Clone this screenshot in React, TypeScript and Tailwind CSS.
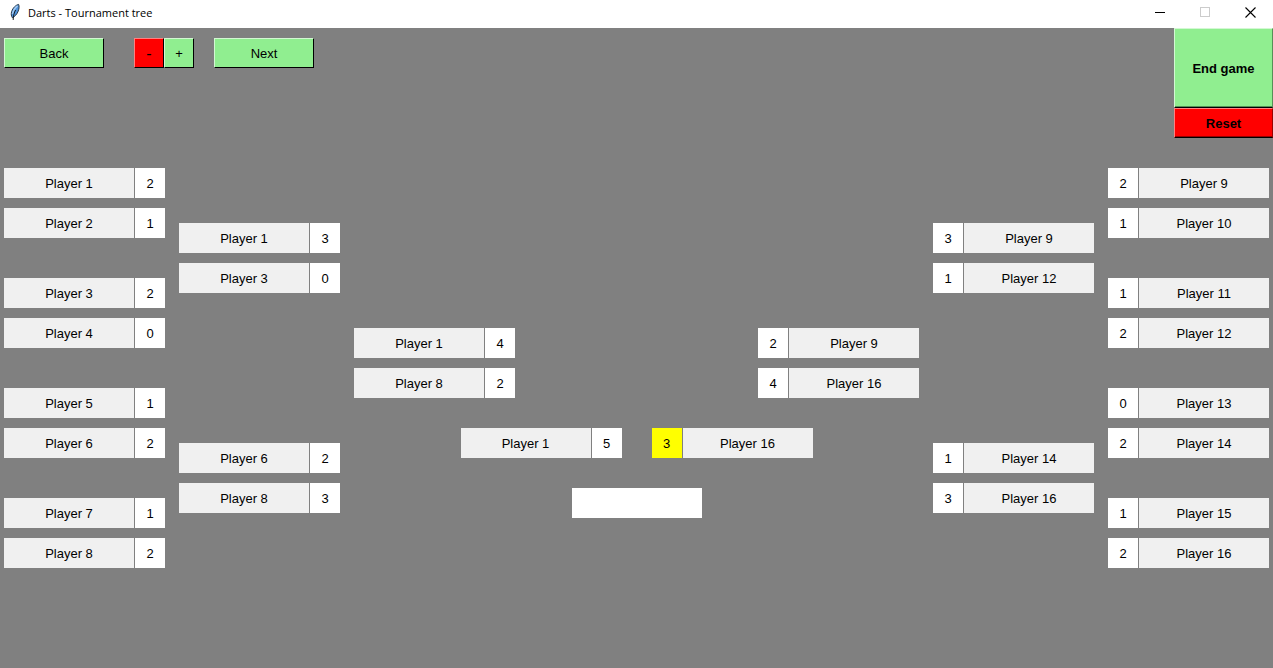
import { useState } from "react";

type Side = "left" | "right";
type Slot = { id: string; player: string; score: number };
type Match = [Slot, Slot];

const slot = (id: string, player: number, score: number): Slot => ({
  id,
  player: `Player ${player}`,
  score,
});

const match = (id: string, a: [number, number], b: [number, number]): Match => [
  slot(`${id}a`, a[0], a[1]),
  slot(`${id}b`, b[0], b[1]),
];

const leftRounds: Match[][] = [
  [
    match("l1", [1, 2], [2, 1]),
    match("l2", [3, 2], [4, 0]),
    match("l3", [5, 1], [6, 2]),
    match("l4", [7, 1], [8, 2]),
  ],
  [match("l5", [1, 3], [3, 0]), match("l6", [6, 2], [8, 3])],
  [match("l7", [1, 4], [8, 2])],
];

const rightRounds: Match[][] = [
  [
    match("r1", [9, 2], [10, 1]),
    match("r2", [11, 1], [12, 2]),
    match("r3", [13, 0], [14, 2]),
    match("r4", [15, 1], [16, 2]),
  ],
  [match("r5", [9, 3], [12, 1]), match("r6", [14, 1], [16, 3])],
  [match("r7", [9, 2], [16, 4])],
];

const finalists: Match = [slot("f1", 1, 5), slot("f2", 16, 3)];

const roundLayout = [
  "flex flex-col gap-10",
  "flex flex-col gap-[150px] pt-[55px]",
  "flex flex-col pt-40",
];

const green =
  "pt-0.5 bg-[#90ee90] border border-t-[#d3f8d3] border-l-[#d3f8d3] border-r-black border-b-black";
const red =
  "pt-0.5 bg-[#ff0000] border border-t-[#ff8080] border-l-[#ff8080] border-r-black border-b-black";

type Board = {
  selected: string;
  onSelect: (id: string) => void;
  scoreOf: (slot: Slot) => number;
};

function Entry({ slot, side, board }: { slot: Slot; side: Side; board: Board }) {
  const active = board.selected === slot.id;
  return (
    <div className={`flex gap-px ${side === "right" ? "flex-row-reverse" : ""}`}>
      <span className="flex h-[30px] w-[130px] items-center justify-center bg-[#f0f0f0] pt-0.5">
        {slot.player}
      </span>
      <button
        type="button"
        aria-label={`${slot.player} score ${board.scoreOf(slot)}`}
        aria-pressed={active}
        onClick={() => board.onSelect(slot.id)}
        className={`h-[30px] w-[30px] pt-0.5 ${active ? "bg-[#ffff00]" : "bg-white"}`}
      >
        {board.scoreOf(slot)}
      </button>
    </div>
  );
}

function Half({ rounds, side, board }: { rounds: Match[][]; side: Side; board: Board }) {
  return (
    <div className={`flex items-start gap-3.5 ${side === "right" ? "flex-row-reverse" : ""}`}>
      {rounds.map((matches, round) => (
        <div key={round} className={roundLayout[round]}>
          {matches.map(([a, b]) => (
            <div key={a.id} className="flex flex-col gap-2.5">
              <Entry slot={a} side={side} board={board} />
              <Entry slot={b} side={side} board={board} />
            </div>
          ))}
        </div>
      ))}
    </div>
  );
}

function Feather() {
  return (
    <svg width="12" height="18" viewBox="0 0 12 18" aria-hidden="true">
      <path
        d="M9.6 1.4C6.8 2 3.6 5 2.6 8.6C2 11 2.2 13 3.4 14.8C5.6 13.6 8 11.4 9.2 8.2C10.2 5.6 10.4 3.2 9.6 1.4Z"
        fill="#4f93dc"
        stroke="#1c2a3a"
        strokeWidth="0.9"
      />
      <path d="M8.6 2.8C6.2 4.4 4.2 7.4 3.5 11" fill="none" stroke="#a5cbf2" strokeWidth="1.5" />
      <path d="M6.6 7C5.2 9.6 4.3 12.4 4.2 17" fill="none" stroke="#111111" strokeWidth="0.9" />
    </svg>
  );
}

function TitleBar() {
  return (
    <header className="flex h-7 items-center justify-between bg-white pl-[9px]">
      <div className="flex h-6 items-center gap-[7px]">
        <div className="pb-1">
          <Feather />
        </div>
        <h1 className="pb-0.5 font-['Open_Sans','Noto_Sans',sans-serif] text-[11px] leading-4">
          Darts - Tournament tree
        </h1>
      </div>
      <div className="flex h-7 items-start">
        <button type="button" aria-label="Minimize" className="flex h-[25px] w-[45px] items-center justify-center">
          <svg width="11" height="11" viewBox="0 0 11 11" shapeRendering="crispEdges">
            <path d="M0 5.5H10" stroke="#000" />
          </svg>
        </button>
        <button type="button" aria-label="Maximize" disabled className="flex h-[25px] w-[45px] items-center justify-center">
          <svg width="11" height="11" viewBox="0 0 11 11" shapeRendering="crispEdges">
            <path d="M0.5 0.5H9.5V9.5H0.5Z" fill="none" stroke="#ccc" />
          </svg>
        </button>
        <button type="button" aria-label="Close" className="flex h-[25px] w-[45px] items-center justify-center">
          <svg width="11" height="11" viewBox="0 0 11 11">
            <path d="M0.5 0.5L10.5 10.5M10.5 0.5L0.5 10.5" stroke="#000" strokeWidth="1.1" />
          </svg>
        </button>
      </div>
    </header>
  );
}

export default function App() {
  const [selected, setSelected] = useState("f2");
  const [changes, setChanges] = useState<Record<string, number>>({});

  const board: Board = {
    selected,
    onSelect: setSelected,
    scoreOf: (s) => s.score + (changes[s.id] ?? 0),
  };
  const change = (by: number) =>
    setChanges((now) => ({ ...now, [selected]: (now[selected] ?? 0) + by }));

  return (
    <div className="flex min-h-screen flex-col bg-[#808080] font-['Liberation_Sans',Arial,sans-serif] text-[13px] leading-4 text-black">
      <TitleBar />
      <div className="flex items-start justify-between pl-1">
        <nav className="flex pt-2.5">
          <button type="button" className={`h-[30px] w-[100px] ${green}`}>
            Back
          </button>
          <div className="mr-5 ml-[30px] flex">
            <button type="button" onClick={() => change(-1)} className={`h-[30px] w-[30px] text-base leading-4 ${red}`}>
              -
            </button>
            <button type="button" onClick={() => change(1)} className={`h-[30px] w-[30px] ${green}`}>
              +
            </button>
          </div>
          <button type="button" className={`h-[30px] w-[100px] ${green}`}>
            Next
          </button>
        </nav>
        <div className="flex w-[99px] flex-col font-bold">
          <button
            type="button"
            className={`h-20 border-r-[#569056]! shadow-[inset_0_-1px_#569056] ${green}`}
          >
            End game
          </button>
          <button
            type="button"
            className={`h-[30px] border-r-[#990000]! shadow-[inset_0_-1px_#990000] ${red}`}
          >
            Reset
          </button>
        </div>
      </div>
      <main className="grid px-1 pt-[30px] pb-[100px]">
        <div className="col-start-1 row-start-1 flex justify-between">
          <Half rounds={leftRounds} side="left" board={board} />
          <Half rounds={rightRounds} side="right" board={board} />
        </div>
        <div className="col-start-1 row-start-1 flex flex-col items-center gap-[30px] justify-self-center pt-[260px]">
          <div className="flex gap-[30px]">
            <Entry slot={finalists[0]} side="left" board={board} />
            <Entry slot={finalists[1]} side="right" board={board} />
          </div>
          <output aria-label="Winner" className="block h-[30px] w-[130px] bg-white" />
        </div>
      </main>
    </div>
  );
}
